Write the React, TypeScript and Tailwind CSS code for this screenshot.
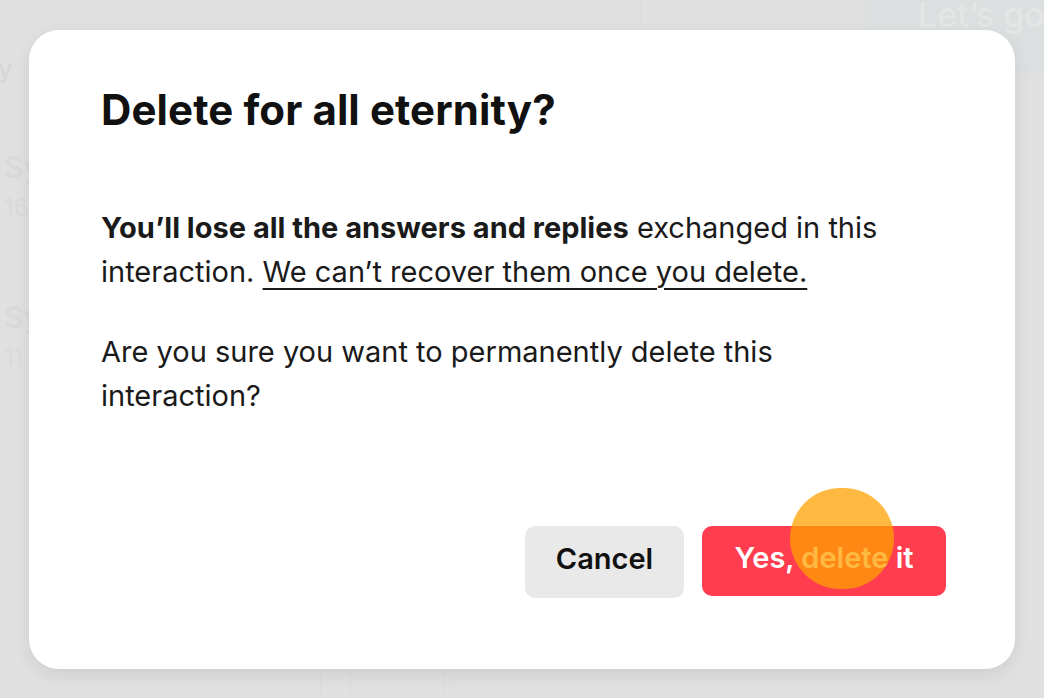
import React from "react";

function Background() {
  return (
    <div className="absolute inset-0 pointer-events-none flex">
      {/* left list column peeking out */}
      <div className="w-[40px] flex flex-col pl-[4px] pt-[56px] text-[#d9d9d9] leading-none">
        <span className="text-[26px] -ml-[6px] text-[#d6d6d6]">y</span>
        <div className="mt-[70px] flex flex-col gap-[14px]">
          <span className="text-[30px] font-semibold">Sy</span>
          <span className="text-[24px] text-[#dadada]">16</span>
        </div>
        <div className="mt-[82px] flex flex-col gap-[14px]">
          <span className="text-[30px] font-semibold">Sy</span>
          <span className="text-[24px] text-[#dadada]">11</span>
        </div>
      </div>
      <div className="flex-1 flex flex-col">
        <div className="flex justify-end">
          <div className="h-[28px] w-[43px] mr-[182px] border-x border-[#dcdcdc]" />
          <div className="w-[179px] h-[73px] rounded-bl-[22px] bg-[#dbdfdf] pl-[53px] text-[34px] leading-[30px] text-[#e4e6e6] font-medium whitespace-nowrap overflow-hidden">
            Let’s go
          </div>
        </div>
        <div className="mt-auto h-[30px] flex pl-[280px] gap-[29px]">
          <div className="w-px bg-[#dcdcdc]" />
          <div className="w-px bg-[#dddad4]" />
          <div className="w-px bg-[#dddad4] ml-[63px]" />
          <div className="w-px bg-[#dcdcdc] -ml-[20px]" />
        </div>
      </div>
    </div>
  );
}

export default function App() {
  return (
    <div
      className="relative w-[1044px] h-[698px] overflow-hidden bg-[#e0e0e0]"
      style={{ fontFamily: "Inter, 'Liberation Sans', sans-serif" }}
    >
      <Background />

      {/* dialog */}
      <div className="absolute inset-0 flex items-center justify-center">
        <div className="w-[986px] h-[639px] bg-white rounded-[30px] shadow-[0_6px_16px_rgba(0,0,0,0.08)] pl-[72px] pr-[69px] pt-[54px] pb-[71px] flex flex-col">
          <h1 className="text-[42px] leading-[52px] font-bold text-[#111111] tracking-[0.1px]">
            Delete for all eternity?
          </h1>
          <div className="mt-[70px] text-[29px] leading-[44px] text-[#1a1a1a] max-w-[800px]">
            <p>
              <span className="font-bold">You’ll lose all the answers and replies</span> exchanged in this
              interaction.{" "}
              <span className="underline underline-offset-[6px] decoration-[2px]">
                We can’t recover them once you delete.
              </span>
            </p>
            <p className="mt-[36px]">
              Are you sure you want to permanently delete this interaction?
            </p>
          </div>
          <div className="mt-auto flex justify-end gap-[18px]">
            <button className="w-[159px] h-[72px] pb-[6px] rounded-[10px] bg-[#e9e9e9] text-[29px] font-semibold text-[#111111]">
              Cancel
            </button>
            <div className="relative">
              <button className="w-[244px] h-[70px] pb-[6px] rounded-[10px] bg-[#ff3d4f] text-[29px] font-semibold text-white">
                Yes, delete it
              </button>
              <div className="absolute left-[88px] top-[-38px] w-[104px] h-[101px] rounded-full bg-[rgba(255,161,2,0.75)]" />
            </div>
          </div>
        </div>
      </div>
    </div>
  );
}
